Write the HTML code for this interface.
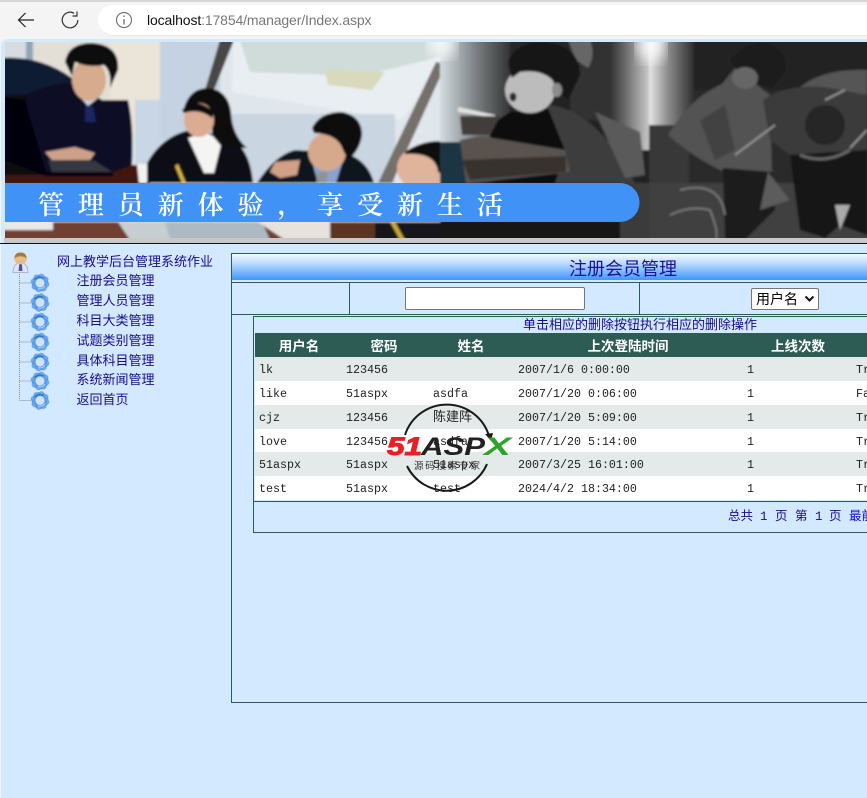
<!DOCTYPE html>
<html lang="zh-CN"><head><meta charset="utf-8"><title>Index</title>
<style>
html,body{margin:0;padding:0;width:867px;height:798px;overflow:hidden;background:#f4f4f4}
*{box-sizing:border-box}
.a{position:absolute;white-space:nowrap}
#page{position:absolute;left:1px;top:39px;width:866px;height:759px;background:#d2e9ff;border-top-left-radius:7px}
.cjk{font-family:"Liberation Sans","Noto Sans CJK SC",sans-serif}
.menu{color:#1a0a8c;font:13px/16px "Liberation Sans","Noto Sans CJK SC",sans-serif;left:76.500px}
.line{position:absolute;background:#2d5c55}
.row{position:absolute;left:255px;width:612px;height:24px}
.c{position:absolute;top:1px;font:11.67px/24px "Liberation Mono","Noto Sans CJK SC",monospace;color:#222;white-space:nowrap}
.z{font-family:"Liberation Sans","Noto Sans CJK SC",sans-serif;font-size:13px;top:0}
.h{position:absolute;top:333px;color:#fff;font:bold 13.5px/24px "Noto Sans CJK SC",sans-serif;transform:translateX(-50%);white-space:nowrap}
.p{position:absolute;top:509px;color:#1a0a8c;font:12.5px/16px "Liberation Mono","Noto Sans CJK SC",monospace;white-space:nowrap}
</style></head><body>
<!-- browser chrome -->
<div class="a" style="left:0;top:0;width:867px;height:2px;background:#d6d6d6"></div>
<div class="a" style="left:98px;top:5px;width:790px;height:30px;background:#fff;border-radius:15px;box-shadow:0 1px 0 #e8e8e8"></div>
<svg class="a" style="left:0;top:0" width="150" height="39" fill="none" stroke="#222" stroke-width="1.2">
<path d="M34 20H18.500M25.500 13L18.500 20L25.500 27"/>
<path d="M77.800 20A7.800 7.800 0 1 1 74 13.300" stroke="#333"/><path d="M77 11.500V16H72.500" stroke="#333"/>
<circle cx="124" cy="20" r="7.500" stroke="#777"/><path d="M124 19v5.500M124 15.500v1.500" stroke="#777" stroke-width="1.400"/>
</svg>
<div class="a" style="left:147px;top:10px;font:14px/20px 'Liberation Sans',sans-serif;color:#777;letter-spacing:-.13px"><span style="color:#111">localhost</span>:17854/manager/Index.aspx</div>

<div id="page"></div>
<!-- banner -->
<svg class="a" style="left:5px;top:42px" width="862" height="196" viewBox="5 42 862 196">
<defs>
<filter id="b" x="-5%" y="-5%" width="110%" height="110%"><feGaussianBlur stdDeviation="1.100"/></filter>
<filter id="b2"><feGaussianBlur stdDeviation="7"/></filter>
<linearGradient id="f" x1="0" x2="1"><stop offset="0" stop-color="#d4dde2"/><stop offset=".5" stop-color="#7d8285"/><stop offset="1" stop-color="#343434"/></linearGradient>
<linearGradient id="f2" x1="0" x2="1"><stop offset="0" stop-color="#303030"/><stop offset="1" stop-color="#c8c8c8"/></linearGradient>
<linearGradient id="g" x1="0" x2="1"><stop offset="0" stop-color="#e8e8e8"/><stop offset=".4" stop-color="#909090"/><stop offset="1" stop-color="#2e2e2e"/></linearGradient>
</defs>
<g filter="url(#b)">
<!-- left photo background -->
<rect x="0" y="40" width="450" height="200" fill="#dfe6ec"/>
<rect x="0" y="40" width="112" height="60" fill="#e3dfd6"/>
<rect x="0" y="40" width="32" height="22" fill="#d6dce0"/><rect x="26" y="40" width="7" height="22" fill="#91a4b8"/>
<rect x="110" y="40" width="52" height="95" fill="#ebe4d8"/>
<rect x="135" y="100" width="85" height="83" fill="#c8d6e5"/>
<rect x="160" y="40" width="60" height="100" fill="#c5d2e2"/>
<polygon points="233,40 445,40 445,66 400,120 232,92" fill="#e9eef3"/>
<polygon points="240,40 445,40 445,56 360,76 250,72" fill="#cfdcda"/>
<polygon points="325,70 385,72 372,90 328,85" fill="#d9d9bb"/>
<rect x="225" y="114" width="170" height="70" fill="#c9d5e0"/>
<polygon points="220,40 234,40 214,90 205,90" fill="#4a4744"/>
<polygon points="436,62 446,64 392,183 378,183" fill="#75706a"/>
<!-- chair, table -->
<path d="M0 58Q40 55 72 78L72 105H0Z" fill="#0d1b30"/>
<rect x="0" y="165" width="150" height="20" fill="#43190f"/>
<rect x="0" y="95" width="44" height="80" fill="#07070b"/>
<!-- man 1 -->
<path d="M27 94Q58 80 78 84L102 100L128 100Q134 125 132 165L115 172H40L27 130Z" fill="#0c0f26"/>
<path d="M74 90L88 106L103 94L100 82Z" fill="#c9d4e4"/><path d="M85 106h8l3 16h-11z" fill="#1c2560"/>
<ellipse cx="89" cy="80" rx="17" ry="21" fill="#d6ab8e"/>
<path d="M65 62Q68 43 92 43Q120 45 118 70L110 88Q112 72 104 65Q88 68 75 62L72 76Z" fill="#07070c"/>
<path d="M45 152L75 147L95 153L90 160L52 160Z" fill="#cda089"/>
<path d="M5 98L25 100L46 172H112L114 176H46L5 160Z" fill="#050507"/>
<path d="M48 160L95 161L112 172H52Z" fill="#35383f"/>
<!-- cup -->
<path d="M137 164H158L153 183H139Z" fill="#f4f3ef"/>
<!-- woman -->
<path d="M147 163Q162 136 190 130L225 136Q250 145 253 183H147Z" fill="#0b0b12"/>
<path d="M188 138L205 132L222 141L214 173H204Z" fill="#f4f5f2"/>
<path d="M184 108Q190 88 208 88Q228 90 231 112Q232 135 247 148L222 147L212 135V115Q200 102 184 108Z" fill="#0a080a"/>
<ellipse cx="199" cy="120" rx="15" ry="17" fill="#dbab92"/>
<path d="M182 110Q195 95 214 112L212 118Q200 108 184 113Z" fill="#0a080a"/>
<path d="M178 164L186 183H182L175 166Z" fill="#d7b53a"/>
<!-- man 2 -->
<path d="M257 183Q275 155 295 150L345 153Q368 160 374 183Z" fill="#10141f"/>
<path d="M313 165L343 160L336 183H318Z" fill="#8ba3cf"/><path d="M318 172h10l-2 11h-10z" fill="#8f948f"/>
<ellipse cx="327" cy="152" rx="19" ry="19" fill="#d6a98d"/>
<path d="M312 128Q320 112 342 112Q362 116 362 135Q360 150 348 160L343 150Q338 134 314 133Z" fill="#08070a"/>
<path d="M270 172L275 162L300 160L297 175L280 178Z" fill="#d0a087"/>
<!-- woman 3 -->
<ellipse cx="422" cy="168" rx="25" ry="22" fill="#e0b39b"/>
<path d="M405 152Q425 138 450 142V178L438 172Q436 152 405 154Z" fill="#0f0b0e"/>
<!-- band bottom left -->
<rect x="0" y="222" width="450" height="18" fill="#6f3f30"/>
<rect x="0" y="222" width="53" height="8" fill="#e8e8e8"/>
<polygon points="118,222 175,222 172,240 130,240" fill="#c7ced1"/>
<polygon points="165,222 262,222 270,240 170,240" fill="#aebac3"/>
<polygon points="258,222 330,222 330,240 285,240" fill="#e6e3dd"/>
<rect x="330" y="222" width="50" height="18" fill="#5b3423"/>
<rect x="375" y="222" width="75" height="18" fill="#17171a"/>
<path d="M395 222L405 240H400L390 222Z" fill="#c9a93a"/>
<!-- middle photo -->
<rect x="440" y="40" width="210" height="200" fill="#202020"/>
<rect x="440" y="40" width="70" height="105" fill="url(#f)"/>
<rect x="510" y="40" width="70" height="50" fill="#282828"/>
<rect x="570" y="40" width="58" height="80" fill="#303030"/>
<rect x="610" y="40" width="39" height="110" fill="url(#f2)"/>
<path d="M568 40H590Q596 55 588 68L576 60Z" fill="#666"/>
<path d="M440 142H470V183H440Z" fill="#1c3642"/>
<path d="M490 125L510 112L550 105Q585 110 615 150L635 183H490Z" fill="#3c3c3c"/>
<path d="M490 125L510 112L548 108L565 150L555 183H490Z" fill="#111"/>
<path d="M595 112L640 132L645 175L625 178Z" fill="#5a5a5a"/>
<path d="M460 140L480 136L565 150L570 172L470 183H466Z" fill="#5a534e"/>
<path d="M462 160L566 156V172L470 180Z" fill="#37322e"/>
<path d="M458 107L495 115V118L458 112Z" fill="#e2e2e2"/>
<path d="M460 116H500L490 135H462Z" fill="#423c3a"/>
<ellipse cx="530" cy="90" rx="25" ry="23" fill="#bcbcbc"/>
<path d="M508 62Q515 42 545 42Q580 46 580 75L568 100L558 88Q548 68 520 72L512 78Z" fill="#141414"/>
<ellipse cx="513" cy="97" rx="3.500" ry="4.500" fill="#2a2a2a"/>
<ellipse cx="557" cy="90" rx="5" ry="7" fill="#8c8c8c"/>
<rect x="440" y="222" width="210" height="18" fill="#181818"/>
<rect x="620" y="183" width="30" height="57" fill="#3a3a3a"/>
<!-- right photo -->
<rect x="649" y="40" width="220" height="200" fill="#2c2c2c"/>
<rect x="649" y="40" width="220" height="50" fill="#222"/>
<rect x="649" y="40" width="45" height="85" fill="url(#g)"/>
<rect x="649" y="125" width="40" height="115" fill="#383838"/>
<path d="M649 183H867V240H649Z" fill="#3f3f3f"/>
<path d="M668 135Q690 98 722 84L735 68L770 95L772 175L742 170L720 170Q690 155 668 135Z" fill="#525252"/>
<path d="M700 120L725 105L735 150L715 160Z" fill="#424242"/>
<path d="M723 168L772 172L775 210L745 240H725Z" fill="#1c1c1c"/>
<path d="M768 172L790 200L760 210Z" fill="#5c5c5c"/>
<path d="M670 215Q690 205 710 210Q720 235 715 240M680 190Q720 180 725 215" fill="none" stroke="#777" stroke-width="2"/>
<path d="M730 60Q745 42 765 43Q788 48 785 72L772 88L758 84L738 72Z" fill="#1c1c1c"/>
<ellipse cx="745" cy="78" rx="13" ry="11" fill="#666"/>
<path d="M797 90Q820 68 867 70V100L810 100Z" fill="#555"/>
<path d="M763 100Q790 82 830 88L867 95V160L800 162L770 140Z" fill="#3a3a3a"/>
<ellipse cx="825" cy="125" rx="20" ry="20" fill="#262626"/>
<path d="M790 155L867 150V235L840 225L825 238L800 230Z" fill="#121212"/>
<path d="M800 155Q825 165 850 150" fill="none" stroke="#666" stroke-width="3"/>
<path d="M825 100L845 90M735 155L775 125M850 148L867 130" stroke="#959595" stroke-width="2" fill="none"/>
<path d="M835 205L840 230L850 205Z" fill="#aaa"/>
</g>
<ellipse cx="651" cy="44" rx="14" ry="18" fill="#fff" opacity=".85" filter="url(#b2)"/>
<ellipse cx="442" cy="44" rx="14" ry="14" fill="#fff" opacity=".8" filter="url(#b2)"/>
<path d="M5 183H620a19.500 19.500 0 0 1 0 39H5Z" fill="#4092f7"/>
<text x="38" y="214" font-family="'Noto Serif CJK SC',serif" font-size="26" fill="#fff" letter-spacing="13.900" font-weight="600">管理员新体验，享受新生活</text>
</svg>
<div class="a" style="left:4px;top:238px;width:863px;height:5px;background:#c8c8c8"></div>
<div class="a" style="left:0;top:243px;width:867px;height:1px;background:#111"></div>

<!-- tree -->
<svg class="a" style="left:8px;top:250px" width="50" height="162" viewBox="8 250 50 162">
<defs>
<g id="gear"><circle r="6.500" fill="none" stroke="#5b9ce8" stroke-width="4"/><circle r="8" fill="none" stroke="#6ea8ec" stroke-width="2.800" stroke-dasharray="3.100 3.180"/><circle r="4.200" fill="#cfe3f8"/><path d="M-5-3.500A6 6 0 0 1 3-5" fill="none" stroke="#2f71c8" stroke-width="1.400"/><path d="M5 3A6 6 0 0 1-2 5.500" fill="none" stroke="#a9cbf2" stroke-width="1.200"/></g>
</defs>
<path d="M19.500 272V400M19.500 283H31M19.500 303H31M19.500 322H31M19.500 342H31M19.500 362H31M19.500 381H31M19.500 400.500H31" stroke="#8a8a8a" stroke-width="1" stroke-dasharray="1 1" fill="none"/>
<use href="#gear" x="40" y="283"/><use href="#gear" x="40" y="302.500"/><use href="#gear" x="40" y="322"/><use href="#gear" x="40" y="342"/><use href="#gear" x="40" y="362"/><use href="#gear" x="40" y="381"/><use href="#gear" x="40" y="400.500"/>
<path d="M13 272.500Q13 263.500 20.500 262.500Q28 263.500 28 272.500Z" fill="#dfe3f2" stroke="#a0a6c4" stroke-width=".7"/>
<path d="M19.300 263h2.500l.7 8h-3.900z" fill="#4a55a8"/>
<ellipse cx="20.500" cy="258.500" rx="6.300" ry="5.800" fill="#e8bd85"/>
<path d="M14.200 258Q15 252.500 20.500 252.500Q26 252.500 26.800 258Q20.500 254.500 14.200 258Z" fill="#a67a3c"/>
</svg>
<div class="a cjk" style="left:57px;top:254px;color:#1a0a8c;font-size:13px;line-height:16px">网上教学后台管理系统作业</div>
<div class="a menu" style="top:273px">注册会员管理</div>
<div class="a menu" style="top:293px">管理人员管理</div>
<div class="a menu" style="top:313px">科目大类管理</div>
<div class="a menu" style="top:333px">试题类别管理</div>
<div class="a menu" style="top:353px">具体科目管理</div>
<div class="a menu" style="top:372px">系统新闻管理</div>
<div class="a menu" style="top:392px">返回首页</div>

<!-- outer panel -->
<div class="line" style="left:231px;top:253px;width:636px;height:1px"></div>
<div class="line" style="left:231px;top:253px;width:1px;height:450px"></div>
<div class="line" style="left:231px;top:702px;width:636px;height:1px"></div>
<div class="a" style="left:232px;top:254px;width:635px;height:26px;background:linear-gradient(#f4faff,#bcdcfd 35%,#4096fb)"></div>
<div class="line" style="left:232px;top:282px;width:635px;height:1px"></div>
<div class="line" style="left:232px;top:314px;width:635px;height:1px"></div>
<div class="line" style="left:349px;top:282px;width:1px;height:32px"></div>
<div class="line" style="left:639px;top:282px;width:1px;height:32px"></div>
<div class="a cjk" style="left:569px;top:257px;font-size:18px;line-height:25px;color:#1c0f9c">注册会员管理</div>
<div class="a" style="left:405px;top:287px;width:180px;height:23px;background:#fff;border:1px solid #767676;border-radius:2px"></div>
<div class="a cjk" style="left:751px;top:288px;width:68px;height:22px;background:#fff;border:1px solid #767676;border-radius:2px;font-size:14px;line-height:20px;padding-left:4px;color:#000">用户名</div>
<svg class="a" style="left:804px;top:295px" width="12" height="8" fill="none" stroke="#111" stroke-width="2"><path d="M1.500 1.500L5.500 5.500L9.500 1.500"/></svg>

<!-- inner panel -->
<div class="line" style="left:253px;top:316px;width:614px;height:1px"></div>
<div class="line" style="left:253px;top:316px;width:1px;height:217px"></div>
<div class="line" style="left:253px;top:532px;width:614px;height:1px"></div>
<div class="line" style="left:254px;top:501px;width:613px;height:1px"></div>
<div class="a cjk" style="left:523px;top:317px;font-size:13px;line-height:16px;color:#1a0a8c">单击相应的删除按钮执行相应的删除操作</div>
<div class="a" style="left:255px;top:333px;width:612px;height:24px;background:#2d5c55"></div>
<div class="h" style="left:299px">用户名</div><div class="h" style="left:384px">密码</div><div class="h" style="left:471px">姓名</div><div class="h" style="left:628px">上次登陆时间</div><div class="h" style="left:798px">上线次数</div>

<div class="row" style="top:357px;background:#e4e9ea"><span class="c" style="left:4px">lk</span><span class="c" style="left:91px">123456</span><span class="c" style="left:263px">2007/1/6 0:00:00</span><span class="c" style="left:492px">1</span><span class="c" style="left:601px">True</span></div>
<div class="row" style="top:381px;background:#fff"><span class="c" style="left:4px">like</span><span class="c" style="left:91px">51aspx</span><span class="c" style="left:178px">asdfa</span><span class="c" style="left:263px">2007/1/20 0:06:00</span><span class="c" style="left:492px">1</span><span class="c" style="left:601px">False</span></div>
<div class="row" style="top:405px;background:#e4e9ea"><span class="c" style="left:4px">cjz</span><span class="c" style="left:91px">123456</span><span class="c z" style="left:178px">陈建阵</span><span class="c" style="left:263px">2007/1/20 5:09:00</span><span class="c" style="left:492px">1</span><span class="c" style="left:601px">True</span></div>
<div class="row" style="top:429px;background:#fff"><span class="c" style="left:4px">love</span><span class="c" style="left:91px">123456</span><span class="c" style="left:178px">asdfa</span><span class="c" style="left:263px">2007/1/20 5:14:00</span><span class="c" style="left:492px">1</span><span class="c" style="left:601px">True</span></div>
<div class="row" style="top:452px;background:#e4e9ea"><span class="c" style="left:4px">51aspx</span><span class="c" style="left:91px">51aspx</span><span class="c" style="left:178px">51aspx</span><span class="c" style="left:263px">2007/3/25 16:01:00</span><span class="c" style="left:492px">1</span><span class="c" style="left:601px">True</span></div>
<div class="row" style="top:476px;background:#fff;height:24px"><span class="c" style="left:4px">test</span><span class="c" style="left:91px">51aspx</span><span class="c" style="left:178px">test</span><span class="c" style="left:263px">2024/4/2 18:34:00</span><span class="c" style="left:492px">1</span><span class="c" style="left:601px">True</span></div>

<span class="p" style="left:728px">总共</span><span class="p" style="left:760px">1</span><span class="p" style="left:775px">页</span><span class="p" style="left:795px">第</span><span class="p" style="left:815px">1</span><span class="p" style="left:829px">页</span><span class="p" style="left:849px;color:#1010d8">最前</span>

<!-- watermark -->
<svg class="a" style="left:380px;top:395px" width="140" height="105" viewBox="380 395 140 105">
<path d="M405 435A44 44 0 0 1 489 436" fill="none" stroke="#1a1a1a" stroke-width="2"/>
<path d="M487 464A44 44 0 0 1 407 466" fill="none" stroke="#1a1a1a" stroke-width="2"/>
<path d="M485 434l6 7 2-8z" fill="#1a1a1a"/>
<text x="387" y="455" font-family="'Liberation Sans',sans-serif" font-size="25" font-weight="bold" font-style="italic" fill="#ee1c25" stroke="#ee1c25" stroke-width="1" textLength="35" lengthAdjust="spacingAndGlyphs">51</text>
<text x="421" y="455" font-family="'Liberation Sans',sans-serif" font-size="25" font-weight="bold" font-style="italic" fill="#222" textLength="64" lengthAdjust="spacingAndGlyphs">ASP</text>
<text x="484" y="455" font-family="'Liberation Sans',sans-serif" font-size="25" font-weight="bold" font-style="italic" fill="#2aa52a" textLength="27" lengthAdjust="spacingAndGlyphs">X</text>
<text x="414" y="469" font-family="'Noto Sans CJK SC',sans-serif" font-size="9.500" fill="#333" textLength="66">源码搜索专家</text>
</svg>
</body></html>
